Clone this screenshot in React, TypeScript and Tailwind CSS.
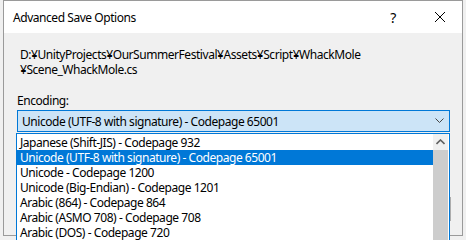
import React from "react";

const items = [
  "Japanese (Shift-JIS) - Codepage 932",
  "Unicode (UTF-8 with signature) - Codepage 65001",
  "Unicode - Codepage 1200",
  "Unicode (Big-Endian) - Codepage 1201",
  "Arabic (864) - Codepage 864",
  "Arabic (ASMO 708) - Codepage 708",
  "Arabic (DOS) - Codepage 720",
];

export default function App() {
  return (
    <div
      className="relative w-[466px] h-[240px] overflow-hidden bg-[#f0f0f0] text-[12px] tracking-[-0.45px] text-black"
      style={{ fontFamily: '"Segoe UI", "Noto Sans", sans-serif' }}
    >
      <div className="ml-[3px] w-[460px] h-[236px] border border-[#9a9a9a] flex flex-col bg-[#f0f0f0]">
        <div className="h-[32px] bg-white flex items-center pl-[9px] shrink-0">
          <span className="flex-1 pt-[2px]">Advanced Save Options</span>
          <span className="w-[14px] text-center mr-[34px] text-[14px]">?</span>
          <svg width="12" height="12" viewBox="0 0 12 12" className="mr-[16px]">
            <path d="M1 1 L11 11 M11 1 L1 11" stroke="#000" strokeWidth="1" />
          </svg>
        </div>
        <div className="flex flex-col pl-[16px] pt-[14px] leading-[15px]">
          <div>D:¥UnityProjects¥OurSummerFestival¥Assets¥Script¥WhackMole</div>
          <div>¥Scene_WhackMole.cs</div>
          <div className="mt-[16px] -ml-[3px]">Encoding:</div>
          <div className="mt-[2px] -ml-[3px] w-[433px] h-[22px] border border-[#0078d7] bg-[#cce4f7] flex items-center pl-[4px]">
            <span className="flex-1">Unicode (UTF-8 with signature) - Codepage 65001</span>
            <svg width="9" height="6" viewBox="0 0 9 6" className="mr-[5px]">
              <path d="M0.5 0.5 L4.5 4.5 L8.5 0.5" stroke="#444" strokeWidth="1" fill="none" />
            </svg>
          </div>
        </div>
        <div className="mt-auto mb-[14px] ml-[366px] w-[81px] h-[24px] border border-[#adadad] bg-[#e1e1e1]" />
      </div>

      <div className="absolute left-[16px] top-[133px] w-[434px] h-[120px] border border-[#0078d7] bg-white flex">
        <div className="flex-1 flex flex-col pt-[1px] leading-[15px]">
          {items.map((t, i) => (
            <div
              key={t}
              className={
                "h-[15px] pl-[3px] whitespace-nowrap " +
                (i === 1 ? "bg-[#0078d7] text-white" : "")
              }
            >
              {t}
            </div>
          ))}
        </div>
        <div className="w-[15px] mr-[1px] flex flex-col bg-[#f0f0f0]">
          <div className="h-[16px] flex items-center justify-center">
            <svg width="9" height="6" viewBox="0 0 9 6">
              <path d="M0.5 5 L4.5 1 L8.5 5" stroke="#606060" strokeWidth="1.6" fill="none" />
            </svg>
          </div>
          <div className="flex-1 bg-[#cdcdcd]" />
        </div>
      </div>
    </div>
  );
}
